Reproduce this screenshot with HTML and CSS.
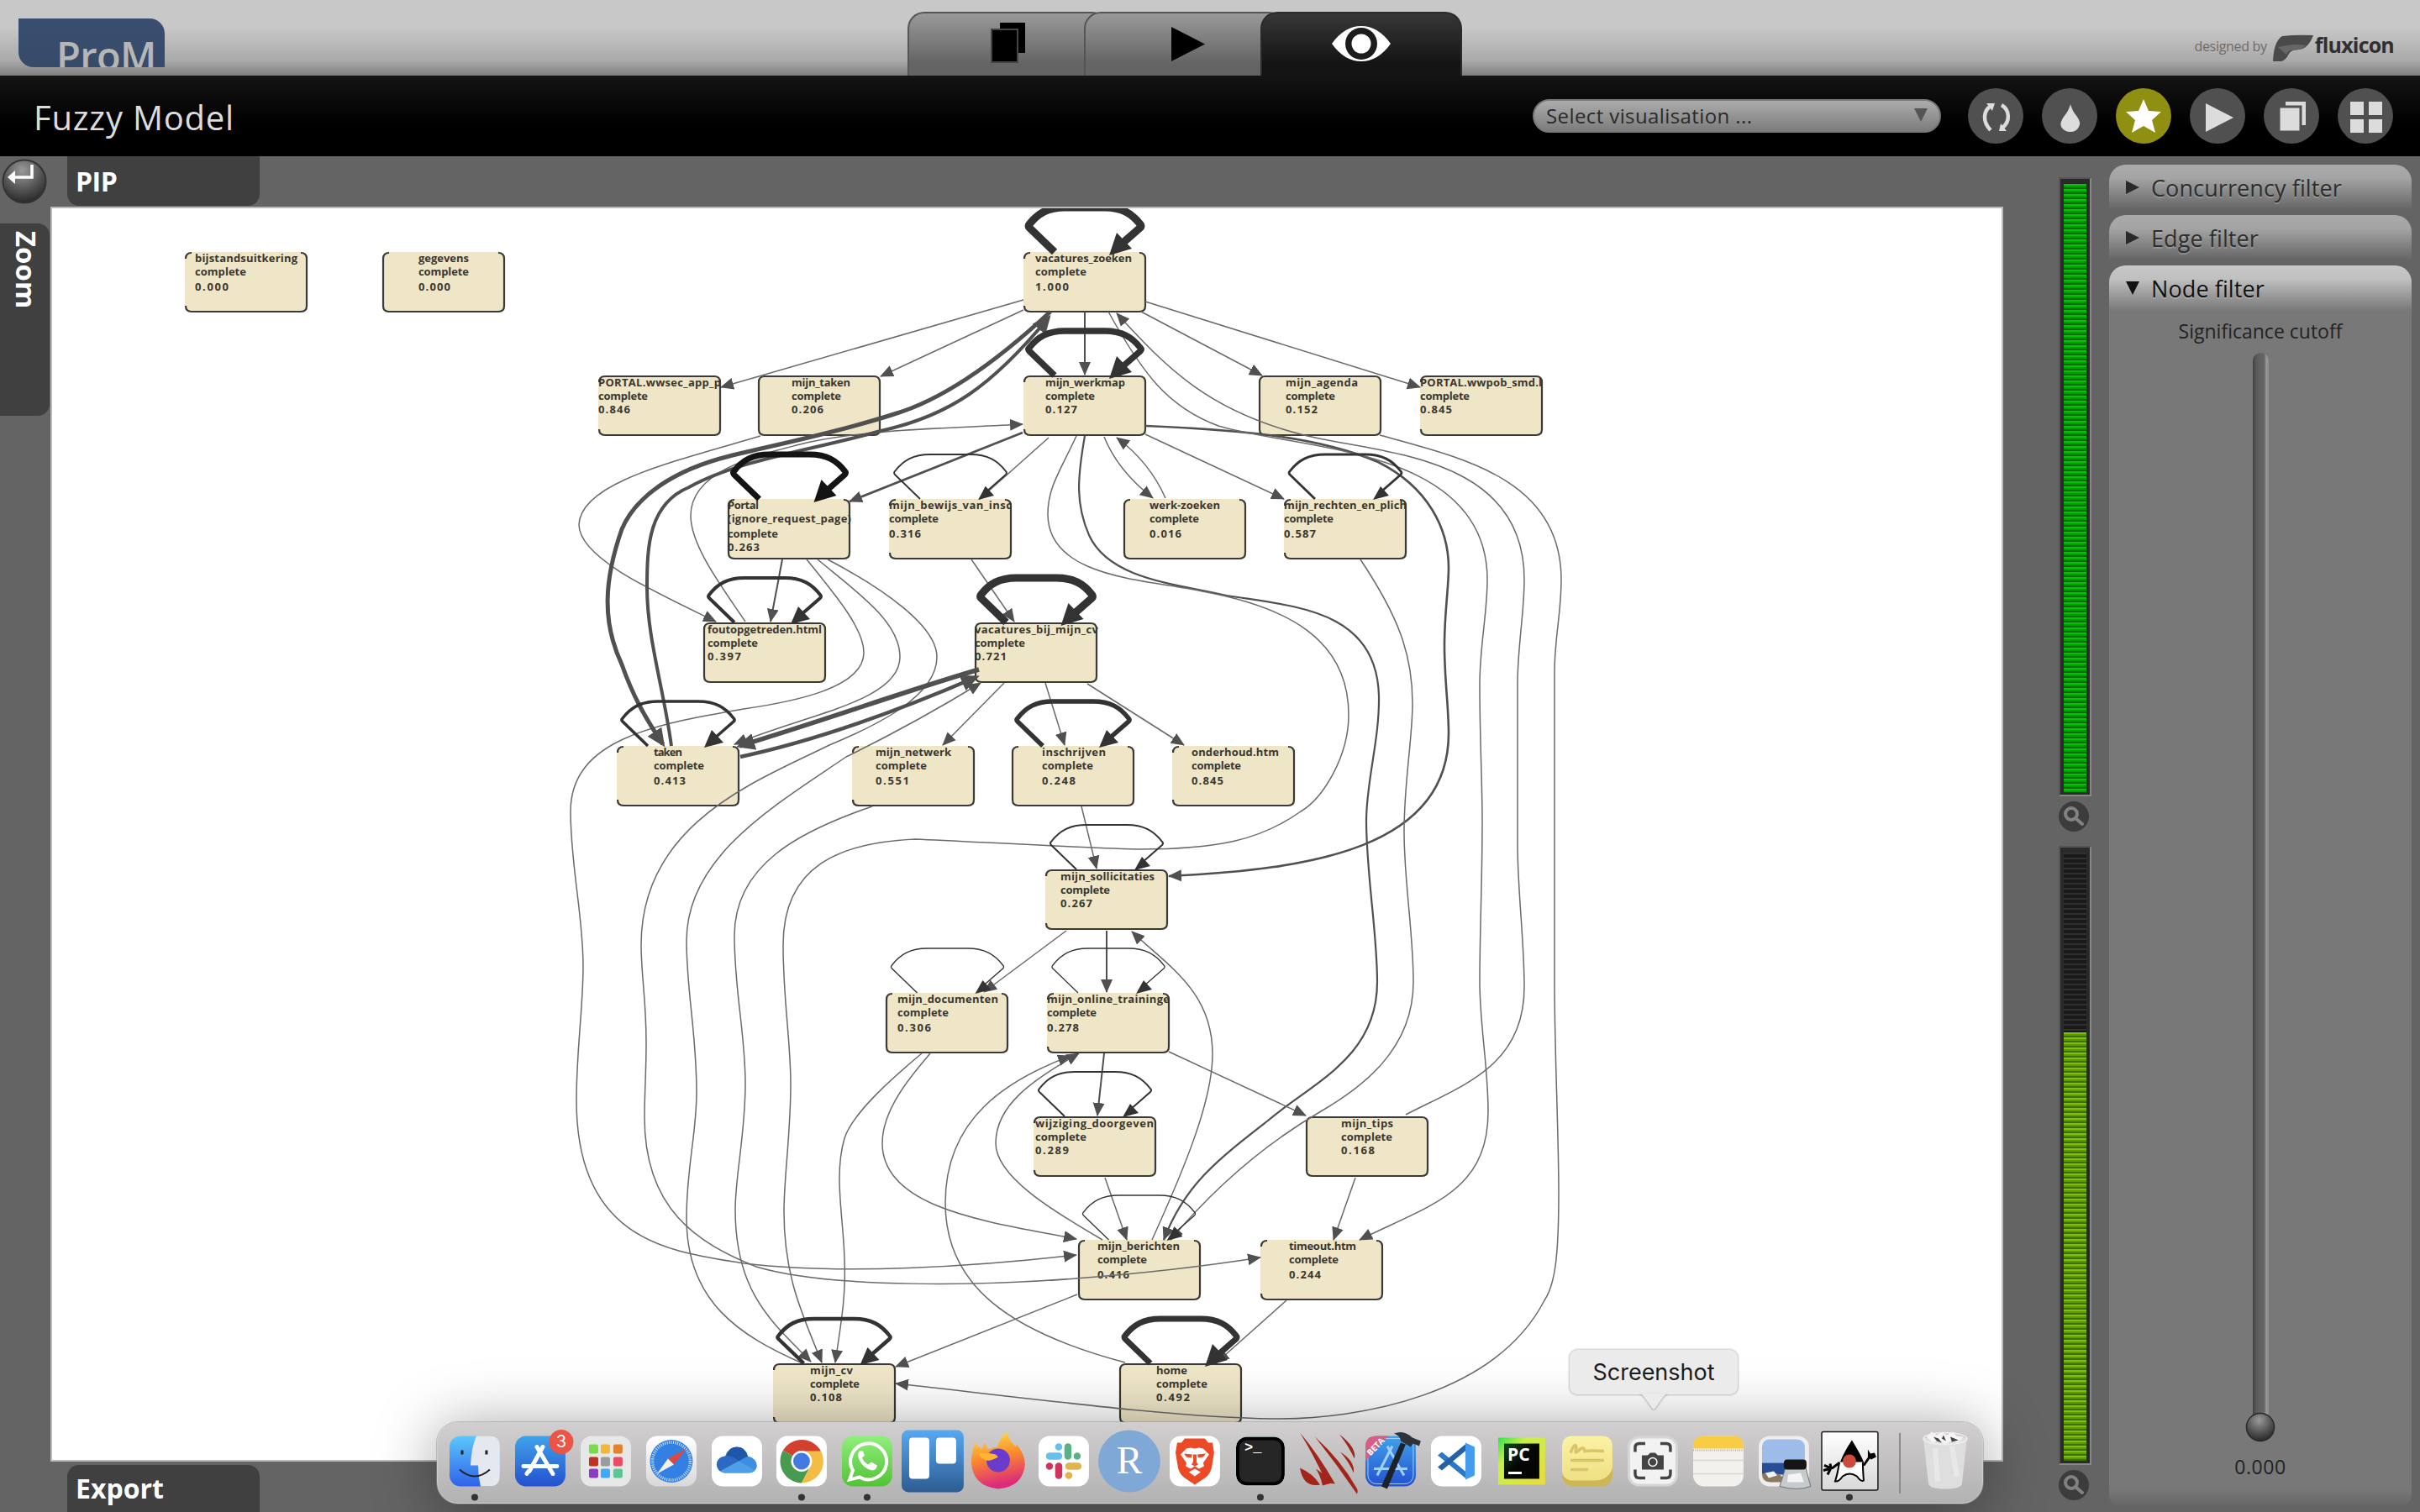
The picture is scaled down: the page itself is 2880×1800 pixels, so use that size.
FILE: index.html
```html
<!DOCTYPE html>
<html lang="en">
<head>
<meta charset="utf-8">
<title>ProM - Fuzzy Model</title>
<link rel="stylesheet" href="styles.css">
</head>
<body>
<div class="app">
  <header class="topbar">
    <div class="logo"><span>ProM</span></div>
    <nav class="tabs">
      <div class="tab"><svg width="44" height="52" viewBox="0 0 44 52"><path d="M12 1h30v36h-30z" fill="#000"/><path d="M2 9h31v39H2z" fill="#000" stroke="#444" stroke-width="2"/></svg></div>
      <div class="tab"><svg width="44" height="44" viewBox="0 0 44 44"><path d="M2 1L42 21.500L2 42z" fill="#000"/></svg></div>
      <div class="tab tab-on"><svg width="72" height="46" viewBox="0 0 72 46"><path d="M1 23Q16 2 36 2T71 23Q56 44 36 44T1 23z" fill="#fff"/><circle cx="36" cy="23" r="19" fill="#1c1c1c"/><circle cx="36" cy="23" r="11.500" fill="#fff"/></svg></div>
    </nav>
    <div class="credit"><span class="by">designed by</span>
      <svg width="52" height="36" viewBox="0 0 52 36"><path d="M13 2Q30 0 50 1Q44 17 33 18Q24 18 21 23Q17 31 12 32H2Q3 8 13 2z" fill="#4a4a4a"/><path d="M8 15Q26 10 42 13Q36 18 27 19Q20 18 18 24z" fill="#666"/></svg>
      <b>fluxicon</b></div>
  </header>

  <section class="titlebar">
    <h1>Fuzzy Model</h1>
    <div class="select"><span>Select visualisation ...</span><i></i></div>
    <div class="actions">
      <svg viewBox="-33 -33 66 66"><circle r="33"/><path d="M-5 -12C-15 -7 -16 7 -6 17M7 -13C17 -7 18 7 7 15" fill="none" stroke="#dcdcdc" stroke-width="4.500"/><path class="g" d="M-11 -15H-1L-4 -6zM13 18H4L6 9z"/></svg>
      <svg viewBox="-33 -33 66 66"><circle r="33"/><path class="g" d="M1 -14Q3 -6 9 1Q14 8 11 13Q8 19 1 19T-10 13Q-12 8 -7 1Q-1 -6 1 -14z"/></svg>
      <svg viewBox="-33 -33 66 66"><circle r="33" class="gold"/><path d="M0 -20L6 -6L21 -5L10 5L14 20L0 12L-14 20L-10 5L-21 -5L-6 -6z" fill="#fff"/></svg>
      <svg viewBox="-33 -33 66 66"><circle r="33"/><path class="g" d="M-14 -15L19 2L-14 19z"/></svg>
      <svg viewBox="-33 -33 66 66"><circle r="33"/><path class="g" d="M-7 -17H17V11H-7z"/><path d="M-15 -11H11V19H-15z" fill="#dcdcdc" stroke="#505050" stroke-width="3"/></svg>
      <svg viewBox="-33 -33 66 66"><circle r="33"/><path class="g" d="M-18 -17H-2V-1H-18zM4 -17H20V-1H4zM-18 4H-2V20H-18zM4 4H20V20H4z"/></svg>
    </div>
  </section>

  <main class="work">
    <aside class="rail">
      <svg class="back" width="56" height="56" viewBox="0 0 56 56"><defs><radialGradient id="knob" cx=".45" cy=".25" r=".8"><stop offset="0" stop-color="#9a9a9a"/><stop offset=".55" stop-color="#555"/><stop offset="1" stop-color="#222"/></radialGradient></defs><circle cx="28" cy="28" r="25.500" fill="url(#knob)" stroke="#333" stroke-width="2"/><path d="M37 8V23H16" fill="none" stroke="#fff" stroke-width="3.500"/><path d="M8 23L17 15V31z" fill="#fff"/></svg>
      <div class="zoomtab"><span>Zoom</span></div>
    </aside>

    <div class="stage">
      <div class="sidetab">PIP</div>
      <div class="canvas">
<svg class="graph" viewBox="62 248 2320 1490" width="2320" height="1490">
<defs>
  <g id="b"><rect width="146" height="72" rx="8" fill="#efe6c8"/><path class="o" d="M1 8Q1 1 8 1M1 64Q1 71 8 71H138Q145 71 145 64V8Q145 1 138 1"/></g>
  <path id="t" class="o" d="M8 1H138"/>
  <path id="l" class="o" d="M1 8V64"/>
  <path id="loop" d="M-36 0L-66 -29Q-68 -31 -66 -33C-56 -46 -44 -53 -24 -53H24C44 -53 56 -46 66 -33Q68 -31 66 -29L42 -8"/>
  <path id="a1" d="M33 1L42 -15L52 -4z"/>
  <path id="a2" d="M31 2L40 -19L54 -4z"/>
  <path id="a3" d="M29 4L38 -23L56 -4z"/>
  <marker id="arr" markerUnits="userSpaceOnUse" markerWidth="18" markerHeight="16" viewBox="0 0 18 16" refX="15" refY="8" orient="auto"><path d="M0 1L16 8L0 15z" fill="#505050"/></marker>
  <marker id="big" markerUnits="userSpaceOnUse" markerWidth="26" markerHeight="22" viewBox="0 0 26 22" refX="18" refY="11" orient="auto"><path d="M0 1L22 11L0 21z" fill="#505050"/></marker>
</defs>
<g class="nodes">
<g transform="translate(220 300)"><use href="#b"/><text x="12" y="12" textLength="122">bijstandsuitkering</text><text x="12" y="28" textLength="61">complete</text><text x="12" y="46" textLength="40">0.000</text></g>
<g transform="translate(455 300)"><use href="#b"/><use href="#l"/><text x="43" y="12" textLength="60">gegevens</text><text x="43" y="28" textLength="60">complete</text><text x="43" y="46" textLength="38">0.000</text></g>
<g transform="translate(1218 300)"><use href="#b"/><text x="14" y="12" textLength="115">vacatures_zoeken</text><text x="14" y="28" textLength="61">complete</text><text x="14" y="46" textLength="40">1.000</text></g>
<g transform="translate(712 447)"><use href="#b"/><use href="#t"/><text x="0" y="13" textLength="146">PORTAL.wwsec_app_p</text><text x="0" y="29" textLength="59">complete</text><text x="0" y="45" textLength="38">0.846</text></g>
<g transform="translate(902 447)"><use href="#b"/><use href="#t"/><use href="#l"/><text x="40" y="13" textLength="70">mijn_taken</text><text x="40" y="29" textLength="59">complete</text><text x="40" y="45" textLength="38">0.206</text></g>
<g transform="translate(1218 447)"><use href="#b"/><use href="#t"/><text x="26" y="13" textLength="95">mijn_werkmap</text><text x="26" y="29" textLength="59">complete</text><text x="26" y="45" textLength="38">0.127</text></g>
<g transform="translate(1498 447)"><use href="#b"/><use href="#t"/><use href="#l"/><text x="32" y="13" textLength="86">mijn_agenda</text><text x="32" y="29" textLength="59">complete</text><text x="32" y="45" textLength="38">0.152</text></g>
<g transform="translate(1690 447)"><use href="#b"/><use href="#t"/><text x="0" y="13" textLength="145">PORTAL.wwpob_smd.l</text><text x="0" y="29" textLength="59">complete</text><text x="0" y="45" textLength="38">0.845</text></g>
<g transform="translate(866 594)"><use href="#b"/><use href="#l"/><text x="0" y="12" textLength="37">Portal</text><text x="0" y="28" textLength="147">(ignore_request_page)</text><text x="0" y="46" textLength="60">complete</text><text x="0" y="62" textLength="38">0.263</text></g>
<g transform="translate(1058 594)"><use href="#b"/><text x="0" y="12" textLength="146">mijn_bewijs_van_insc</text><text x="0" y="28" textLength="59">complete</text><text x="0" y="46" textLength="38">0.316</text></g>
<g transform="translate(1337 594)"><use href="#b"/><use href="#l"/><text x="31" y="12" textLength="84">werk-zoeken</text><text x="31" y="28" textLength="59">complete</text><text x="31" y="46" textLength="38">0.016</text></g>
<g transform="translate(1528 594)"><use href="#b"/><text x="0" y="12" textLength="146">mijn_rechten_en_plich</text><text x="0" y="28" textLength="59">complete</text><text x="0" y="46" textLength="38">0.587</text></g>
<g transform="translate(837 741)"><use href="#b"/><use href="#t"/><use href="#l"/><text x="5" y="13" textLength="136">foutopgetreden.html</text><text x="5" y="29" textLength="60">complete</text><text x="5" y="45" textLength="40">0.397</text></g>
<g transform="translate(1160 741)"><use href="#b"/><use href="#t"/><use href="#l"/><text x="0" y="13" textLength="147">vacatures_bij_mijn_cv</text><text x="0" y="29" textLength="60">complete</text><text x="0" y="45" textLength="38">0.721</text></g>
<g transform="translate(734 888)"><use href="#b"/><text x="44" y="12" textLength="34">taken</text><text x="44" y="28" textLength="60">complete</text><text x="44" y="46" textLength="38">0.413</text></g>
<g transform="translate(1014 888)"><use href="#b"/><text x="28" y="12" textLength="90">mijn_netwerk</text><text x="28" y="28" textLength="61">complete</text><text x="28" y="46" textLength="40">0.551</text></g>
<g transform="translate(1204 888)"><use href="#b"/><use href="#l"/><text x="36" y="12" textLength="76">inschrijven</text><text x="36" y="28" textLength="61">complete</text><text x="36" y="46" textLength="40">0.248</text></g>
<g transform="translate(1395 888)"><use href="#b"/><text x="23" y="12" textLength="104">onderhoud.htm</text><text x="23" y="28" textLength="59">complete</text><text x="23" y="46" textLength="38">0.845</text></g>
<g transform="translate(1244 1035)"><use href="#b"/><use href="#t"/><text x="18" y="13" textLength="112">mijn_sollicitaties</text><text x="18" y="29" textLength="59">complete</text><text x="18" y="45" textLength="38">0.267</text></g>
<g transform="translate(1054 1182)"><use href="#b"/><use href="#l"/><text x="14" y="12" textLength="120">mijn_documenten</text><text x="14" y="28" textLength="61">complete</text><text x="14" y="46" textLength="40">0.306</text></g>
<g transform="translate(1246 1182)"><use href="#b"/><text x="0" y="12" textLength="146">mijn_online_traininge</text><text x="0" y="28" textLength="59">complete</text><text x="0" y="46" textLength="38">0.278</text></g>
<g transform="translate(1230 1329)"><use href="#b"/><use href="#t"/><text x="2" y="13" textLength="141">wijziging_doorgeven</text><text x="2" y="29" textLength="61">complete</text><text x="2" y="45" textLength="40">0.289</text></g>
<g transform="translate(1554 1329)"><use href="#b"/><use href="#t"/><use href="#l"/><text x="42" y="13" textLength="62">mijn_tips</text><text x="42" y="29" textLength="61">complete</text><text x="42" y="45" textLength="40">0.168</text></g>
<g transform="translate(1283 1476)"><use href="#b"/><use href="#l"/><text x="23" y="12" textLength="98">mijn_berichten</text><text x="23" y="28" textLength="59">complete</text><text x="23" y="46" textLength="38">0.416</text></g>
<g transform="translate(1500 1476)"><use href="#b"/><text x="34" y="12" textLength="80">timeout.htm</text><text x="34" y="28" textLength="59">complete</text><text x="34" y="46" textLength="38">0.244</text></g>
<g transform="translate(920 1623)"><use href="#b"/><use href="#t"/><text x="44" y="13" textLength="51">mijn_cv</text><text x="44" y="29" textLength="59">complete</text><text x="44" y="45" textLength="38">0.108</text></g>
<g transform="translate(1332 1623)"><use href="#b"/><use href="#t"/><use href="#l"/><text x="44" y="13" textLength="37">home</text><text x="44" y="29" textLength="61">complete</text><text x="44" y="45" textLength="40">0.492</text></g>
</g>
<g class="edges">
<path d="M1218 357L858 461"/>
<path d="M1218 369L1048 448"/>
<path d="M1291 371V446" stroke-width="2"/>
<path d="M1358 371L1502 447"/>
<path d="M1363 359L1690 461"/>
<path d="M905 519C800 550 690 575 689 625C690 665 780 705 852 740"/>
<path d="M887 740C860 700 822 650 822 614C822 560 900 542 960 527C1040 510 1130 510 1217 505"/>
<path d="M1217 515L1011 597" stroke-width="2.600"/>
<path d="M1248 521L1166 594"/>
<path d="M1314 520Q1330 560 1372 593"/>
<path d="M1387 593Q1368 550 1329 521"/>
<path d="M1363 517L1528 594"/>
<path d="M1291 519C1282 570 1280 600 1296 637C1320 690 1400 695 1460 709C1540 722 1638 725 1641 828C1642 880 1626 930 1626 977C1626 1040 1639 1110 1639 1169C1639 1260 1560 1290 1509 1334C1450 1380 1410 1410 1385 1476" stroke-width="2.200"/>
<path d="M1281 519C1262 560 1247 580 1247 612C1247 690 1370 690 1431 704C1530 722 1605 760 1605 851C1605 900 1575 950 1548 966C1500 1000 1450 1011 1354 1011C1257 1008 1160 1002 1089 999C1000 1003 932 1030 932 1125C932 1190 941 1240 941 1290C941 1350 933 1400 933 1443C933 1520 955 1565 978 1622"/>
<path d="M1363 507C1480 512 1570 520 1640 550C1700 580 1724 630 1724 676C1724 700 1719 730 1719 768C1719 810 1724 840 1724 873C1724 1010 1560 1035 1391 1043" stroke-width="2.600"/>
<path d="M1319 371C1360 445 1390 485 1450 507C1540 535 1770 530 1770 690C1770 730 1761 770 1761 814C1761 880 1764 930 1764 977C1764 1050 1761 1110 1761 1169C1761 1220 1771 1270 1771 1323C1771 1420 1700 1435 1618 1476"/>
<path d="M1673 1327C1740 1292 1814 1270 1814 1175C1814 1120 1806 1060 1806 1005V814C1806 770 1814 730 1814 690C1814 540 1640 540 1552 518C1440 490 1390 440 1329 373"/>
<path d="M1642 518C1740 545 1858 570 1858 690C1858 730 1850 760 1850 800V1170C1850 1250 1855 1350 1855 1420C1855 1500 1850 1530 1838 1548C1780 1660 1620 1690 1514 1689C1400 1688 1230 1665 1066 1647"/>
<path d="M1619 666C1665 735 1681 780 1681 837C1681 880 1671 930 1671 990C1671 1050 1682 1110 1682 1169C1682 1250 1620 1295 1572 1323C1500 1365 1440 1420 1393 1476"/>
<path d="M1156 666L1207 740"/>
<path d="M931 666L917 740" stroke-width="2"/>
<path d="M960 666C1000 715 1028 750 1028 777C1028 820 940 836 885 844C780 862 679 880 679 966C679 1030 694 1090 694 1150C694 1200 686 1250 686 1310C686 1480 800 1490 885 1504C1000 1518 1160 1508 1281 1494"/>
<path d="M973 666C1020 705 1071 740 1071 782C1071 835 960 850 874 886"/>
<path d="M985 666C1050 700 1115 745 1115 782C1115 830 1040 865 987 887C900 930 763 980 763 1125C763 1160 769 1190 769 1240C769 1280 767 1300 767 1330C767 1440 830 1480 900 1508C990 1535 1180 1530 1280 1522C1360 1516 1430 1508 1500 1497"/>
<path d="M955 1623C880 1590 817 1550 817 1450C817 1390 829 1350 829 1300C829 1230 817 1180 817 1120C817 1020 920 960 1007 901C1060 875 1110 848 1167 813"/>
<path d="M1038 960C950 990 874 1030 874 1114C874 1180 887 1230 887 1290C887 1350 875 1400 875 1440C875 1540 920 1575 965 1621"/>
<path d="M1195 813L1122 887"/>
<path d="M1244 813L1267 887"/>
<path d="M1294 814L1409 887"/>
<path d="M1287 960L1305 1034"/>
<path d="M1269 1108L1171 1181"/>
<path d="M1317 1108V1181" stroke-width="2"/>
<path d="M1371 1476C1410 1390 1443 1310 1443 1255C1443 1180 1390 1150 1347 1109"/>
<path d="M1097 1254C1060 1285 1015 1325 1005 1355C992 1400 1004 1450 1005 1500C1007 1545 1000 1580 994 1622"/>
<path d="M1107 1254C1085 1280 1050 1320 1050 1361C1050 1440 1180 1455 1281 1475"/>
<path d="M1312 1476C1250 1440 1185 1400 1185 1361C1185 1315 1230 1285 1284 1254"/>
<path d="M1339 1622C1200 1585 1125 1530 1125 1432C1125 1330 1200 1285 1274 1257"/>
<path d="M1314 1254L1306 1328" stroke-width="2"/>
<path d="M1391 1252L1554 1328"/>
<path d="M1315 1402L1341 1476"/>
<path d="M1613 1402L1587 1476"/>
<path d="M1531 1548L1448 1622"/>
<path d="M1282 1541L1066 1627"/>
</g>
<g class="heavy">
<path d="M1250 371C1192 425 1125 475 1064 493C990 517 910 532 868 543C800 560 756 592 740 630C719 690 716 740 740 791C753 828 768 855 789 886" stroke-width="5"/>
<path d="M799 888C790 820 770 760 770 699C770 650 772 600 820 580C880 547 970 535 1048 513C1130 495 1180 460 1248 378" stroke-width="4"/>
<path d="M1165 797C1070 825 980 858 880 888" stroke-width="5.500"/>
<path d="M881 901C970 882 1060 850 1162 806" stroke-width="4.500"/>
</g>
<g class="loops">
<g transform="translate(1291 300)"><use href="#loop" stroke-width="9"/><use href="#a3" class="h"/></g>
<g transform="translate(1291 447)"><use href="#loop" stroke-width="7.500"/><use href="#a3" class="h"/></g>
<g transform="translate(939.500 594)" class="dark"><use href="#loop" stroke-width="7"/><use href="#a3" class="h"/></g>
<g transform="translate(1131 594)"><use href="#loop" stroke-width="1.800"/><use href="#a1" class="h"/></g>
<g transform="translate(1601 594)"><use href="#loop" stroke-width="2.800"/><use href="#a1" class="h"/></g>
<g transform="translate(910 741)"><use href="#loop" stroke-width="4"/><use href="#a2" class="h"/></g>
<g transform="translate(1233.500 741)"><use href="#loop" stroke-width="9"/><use href="#a3" class="h"/></g>
<g transform="translate(807 888)"><use href="#loop" stroke-width="3.600"/><use href="#a2" class="h"/></g>
<g transform="translate(1277 888)"><use href="#loop" stroke-width="5.500"/><use href="#a2" class="h"/></g>
<g transform="translate(1317 1035)"><use href="#loop" stroke-width="2"/><use href="#a1" class="h"/></g>
<g transform="translate(1127.500 1182)"><use href="#loop" stroke-width="1.400"/><use href="#a1" class="h"/></g>
<g transform="translate(1319 1182)"><use href="#loop" stroke-width="1.300"/><use href="#a1" class="h"/></g>
<g transform="translate(1303 1329)"><use href="#loop" stroke-width="2"/><use href="#a1" class="h"/></g>
<g transform="translate(1355.500 1476)"><use href="#loop" stroke-width="1.300"/><use href="#a1" class="h"/></g>
<g transform="translate(992.500 1623)"><use href="#loop" stroke-width="4.500"/><use href="#a2" class="h"/></g>
<g transform="translate(1405 1623)"><use href="#loop" stroke-width="7"/><use href="#a3" class="h"/></g>
</g>
</svg>
      </div>
      <div class="sidetab sidetab-low">Export</div>
    </div>

    <div class="meters">
      <div class="meter green"><div style="height:100%"></div></div>
      <svg class="mag" viewBox="0 0 36 36"><circle cx="18" cy="18" r="18"/><circle cx="15" cy="15" r="7"/><path d="M20 20L28 27"/></svg>
      <div class="meter lime"><div style="height:70.500%"></div></div>
      <svg class="mag" viewBox="0 0 36 36"><circle cx="18" cy="18" r="18"/><circle cx="15" cy="15" r="7"/><path d="M20 20L28 27"/></svg>
    </div>

    <aside class="filters">
      <div class="fhead"><i class="right"></i>Concurrency filter</div>
      <div class="fhead"><i class="right"></i>Edge filter</div>
      <div class="fopen">
        <div class="fhead on"><i class="down"></i>Node filter</div>
        <div class="cut">Significance cutoff</div>
        <div class="track"></div>
        <svg class="thumb" width="36" height="36" viewBox="0 0 36 36"><circle cx="18" cy="18" r="16.500" fill="url(#knob)" stroke="#2a2a2a" stroke-width="1.500"/></svg>
        <div class="val">0.000</div>
      </div>
    </aside>
  </main>
</div>

<div class="tooltip">Screenshot<svg width="34" height="20" viewBox="0 0 34 20"><path d="M0 0Q4 1 7 6L15 17Q17 20 19 17L27 6Q30 1 34 0z" fill="#ebebeb"/></svg></div>

<div class="dock">
<svg viewBox="-39 -45.500 78 96"><defs>
<linearGradient id="gb" x2="0" y2="1"><stop offset="0" stop-color="#5cc8fa"/><stop offset="1" stop-color="#2f62ea"/></linearGradient>
<linearGradient id="gas" x2="0" y2="1"><stop offset="0" stop-color="#3fa3ea"/><stop offset="1" stop-color="#2550cf"/></linearGradient>
<linearGradient id="gw" x2="0" y2="1"><stop offset="0" stop-color="#8fef7c"/><stop offset="1" stop-color="#53c236"/></linearGradient>
<linearGradient id="gt" x2="0" y2="1"><stop offset="0" stop-color="#56a9f0"/><stop offset="1" stop-color="#2d5c92"/></linearGradient>
<linearGradient id="gf" x2=".2" y2="1"><stop offset="0" stop-color="#ffe94a"/><stop offset=".5" stop-color="#fb8a2c"/><stop offset="1" stop-color="#dc2a7c"/></linearGradient>
<linearGradient id="gp" x2="1" y2="1"><stop offset="0" stop-color="#2fe24d"/><stop offset=".3" stop-color="#c8f04a"/><stop offset="1" stop-color="#e8dc3c"/></linearGradient>
<linearGradient id="gk" x2="1" y2="1"><stop offset="0" stop-color="#164a1c"/><stop offset=".5" stop-color="#050505"/></linearGradient>
<linearGradient id="gy" x2="0" y2="1"><stop offset="0" stop-color="#fbf2a4"/><stop offset="1" stop-color="#efe084"/></linearGradient>
<linearGradient id="gs" x2="0" y2="1"><stop offset="0" stop-color="#fff"/><stop offset="1" stop-color="#d8d8d8"/></linearGradient>
</defs>
<rect x="-30" y="-30" width="60" height="60" rx="13" fill="url(#gb)"/><path d="M2 -30H17Q30 -30 30 -17V17Q30 30 17 30H7Q4 18 4 5H-5Q-4 -16 2 -30z" fill="#e4e8ef"/><path d="M-15 -13V-8M14 -13V-8" stroke="#222" stroke-width="3"/><path d="M-18 10Q0 26 18 10" fill="none" stroke="#222" stroke-width="2"/><circle cy="43" r="4" class="dot"/></svg>
<svg viewBox="-39 -45.500 78 96"><rect x="-30" y="-30" width="60" height="60" rx="13" fill="url(#gas)"/><path d="M3 -17L-13 12M-4 -17L15 15M-20 6H20M-14 12L-16 15" stroke="#fff" stroke-width="5" stroke-linecap="round"/><circle cx="25" cy="-23" r="14.500" fill="#ea5545"/><text x="25" y="-16.500" class="badge">3</text></svg>
<svg viewBox="-39 -45.500 78 96"><rect x="-30" y="-30" width="60" height="60" rx="13" fill="#e6e8e8"/><g><rect x="-20" y="-20" width="11" height="11" rx="2" fill="#76dd49"/><rect x="-6" y="-20" width="11" height="11" rx="2" fill="#f2b63a"/><rect x="9" y="-20" width="11" height="11" rx="2" fill="#e4822c"/><rect x="-20" y="-5" width="11" height="11" rx="2" fill="#c32f22"/><rect x="-6" y="-5" width="11" height="11" rx="2" fill="#999c9c"/><rect x="9" y="-5" width="11" height="11" rx="2" fill="#ea4b62"/><rect x="-20" y="9" width="11" height="11" rx="2" fill="#8c3cc4"/><rect x="-6" y="9" width="11" height="11" rx="2" fill="#3fa9f5"/><rect x="9" y="9" width="11" height="11" rx="2" fill="#5cc596"/></g></svg>
<svg viewBox="-39 -45.500 78 96"><rect x="-30" y="-30" width="60" height="60" rx="13" fill="url(#gs)"/><circle r="25.500" fill="#3380e4"/><circle r="22.500" fill="none" stroke="#cfe4fa" stroke-width="3.500" stroke-dasharray="1 1.500"/><path d="M18 -15L3 4L-4 -3z" fill="#e2453a"/><path d="M-17 15L3 4L-4 -3z" fill="#f2f2f2"/></svg>
<svg viewBox="-39 -45.500 78 96"><rect x="-30" y="-30" width="60" height="60" rx="13" fill="#fff"/><path d="M-14 -6Q-10 -17 0 -17Q10 -17 13 -6Q24 -3 24 6Q22 14 14 14H-15Q-24 12 -24 4Q-24 -4 -14 -6z" fill="#3c8ee0"/><path d="M-13 -6Q-10 -17 0 -17Q10 -17 13 -6L2 0Q-5 -6 -13 -6z" fill="#1f57a8"/><path d="M2 0L-20 12Q-25 7 -24 2Q-21 -6 -13 -6Q-5 -6 2 0z" fill="#2c68c4"/><path d="M2 0L22 11Q19 14 14 14H-15L-20 12z" fill="#4f9fe8"/></svg>
<svg viewBox="-39 -45.500 78 96"><rect x="-30" y="-30" width="60" height="60" rx="13" fill="#fff"/><path d="M0 0L-22 -13A26 26 0 0 1 23 -12z" fill="#d3402f"/><path d="M0 0L-22 -13A26 26 0 0 0 0 26L11 5z" fill="#479a50"/><path d="M0 -12H23A26 26 0 0 1 0 26L11 5z" fill="#f2bd42"/><circle r="12.500" fill="#fff"/><circle r="10" fill="#4379e0"/><circle cy="43" r="4" class="dot"/></svg>
<svg viewBox="-39 -45.500 78 96"><rect x="-30" y="-30" width="60" height="60" rx="13" fill="url(#gw)"/><path d="M-21 22L-17 11A21.500 21.500 0 1 1 -9 19z" fill="none" stroke="#fff" stroke-width="4"/><path d="M-9 -12Q-12 -9 -10 -3Q-5 9 6 11Q11 11 12 5L5 1L1 4Q-4 1 -6 -4L-3 -7L-5 -12z" fill="#fff"/><circle cy="43" r="4" class="dot"/></svg>
<svg viewBox="-39 -45.500 78 96"><rect x="-37" y="-37" width="74" height="74" rx="8" fill="url(#gt)"/><rect x="-28" y="-28" width="24" height="49" rx="4" fill="#fff"/><rect x="4" y="-28" width="24" height="31" rx="4" fill="#fff"/></svg>
<svg viewBox="-39 -45.500 78 96"><path d="M-27 -22L-20 -14L-16 -22L-12 -14Q-6 -17 -1 -17Q2 -28 10 -35Q13 -25 21 -17L22 -20Q32 -8 32 4Q29 31 0 33Q-30 30 -32 2Q-32 -12 -27 -22z" fill="url(#gf)"/><circle cy="-1" r="14" fill="#6b3ccc"/><path d="M-14 -1Q-23 -5 -24 -9Q-14 -11 -3 -8L0 -5Q-8 0 -14 -1z" fill="#ffb62e"/></svg>
<svg viewBox="-39 -45.500 78 96"><rect x="-30" y="-30" width="60" height="60" rx="13" fill="#fff"/><g stroke-width="8.500" stroke-linecap="round"><path d="M-17 -6H-6M-6 -17V-17" stroke="#63c1ea"/><path d="M5 -17V-6M16 -6V-6" stroke="#58b384"/><path d="M6 6H17M6 17V17" stroke="#e2b44c"/><path d="M-6 6V17M-17 6V6" stroke="#cf345c"/></g></svg>
<svg viewBox="-39 -45.500 78 96"><circle r="37" fill="#80a8d6"/><text x="0" y="15" class="rr">R</text></svg>
<svg viewBox="-39 -45.500 78 96"><rect x="-30" y="-30" width="60" height="60" rx="13" fill="#fff"/><path d="M-12 -27H12L16 -22H21L23 -10L20 8Q18 16 12 20L0 28L-12 20Q-18 16 -20 8L-23 -10L-21 -22H-16z" fill="#ec4a26"/><path d="M-10 -15L-5 -16L0 -15L5 -16L10 -15L17 -8L10 2L11 6L5 9L0 6L-5 9L-11 6L-10 2L-17 -8z" fill="#fff"/><path d="M-13 -9L-3 -8L-4 -4L-10 -5zM13 -9L3 -8L4 -4L10 -5zM-2 -8V1L-4 4L0 6L4 4L2 1V-8z" fill="#ec4a26"/><path d="M-7 13L0 9L7 13L0 18z" fill="#fff"/></svg>
<svg viewBox="-39 -45.500 78 96"><rect x="-27" y="-27" width="54" height="54" rx="11" fill="#262626" stroke="#000" stroke-width="4"/><rect x="-29.500" y="-29.500" width="59" height="59" rx="13" fill="none" stroke="#bcc9cc"/><text x="-19" y="-12" class="term">&gt;_</text><circle cy="43" r="4" class="dot"/></svg>
<svg viewBox="-39 -45.500 78 96"><path d="M-34 -36Q-12 -10 8 25L-2 24Q-18 -10 -34 -36zM-16 -31Q15 -3 33 29Q36 33 34 37Q10 2 -16 -31zM13 -34Q34 -18 31 -5Q24 -20 13 -34zM14 -13Q32 -2 30 12Q24 -2 14 -13zM-34 6Q-18 13 -10 26Q-30 30 -34 6zM-15 7Q-4 14 4 24L-7 27Q-10 14 -15 7z" transform="translate(3 2)" fill="#a3241a"/></svg>
<svg viewBox="-39 -45.500 78 96"><rect x="-30" y="-30" width="60" height="60" rx="13" fill="url(#gas)"/><rect x="-27" y="-27" width="54" height="54" rx="10" fill="none" stroke="#9fd0fa"/><path d="M2 -18L-16 17M-4 -18L16 17M-20 9H20" stroke="#9fd0fa" stroke-width="3" fill="none"/><path d="M-30 0V-17Q-30 -30 -17 -30H-3z" fill="#d65f88"/><text x="-24" y="-6" class="beta" transform="rotate(-46 -24 -6)">BETA</text><path d="M12 -22L18 -20L-4 33L-11 30z" fill="#1e2226"/><path d="M4 -33Q16 -38 26 -28L36 -24L34 -18L27 -21L24 -17L12 -24Q12 -30 4 -33z" fill="#2d3338"/></svg>
<svg viewBox="-39 -45.500 78 96"><rect x="-30" y="-30" width="60" height="60" rx="13" fill="#fff"/><path d="M-22 -7L-17 -11L12 13V21z" fill="#2a78c8"/><path d="M-22 7L-17 11L12 -13V-21z" fill="#2462a6"/><path d="M11 -22L22 -17V17L11 22z" fill="#459bee"/></svg>
<svg viewBox="-39 -45.500 78 96"><rect x="-28" y="-28" width="56" height="56" fill="url(#gp)"/><rect x="-21" y="-21" width="42" height="42" fill="url(#gk)"/><text x="-17" y="-1" class="pc">PC</text><path d="M-16 14H0" stroke="#fff" stroke-width="3"/></svg>
<svg viewBox="-39 -45.500 78 96"><rect x="-30" y="-24" width="60" height="54" rx="13" fill="#cfb654"/><path d="M-17 -30H17Q30 -30 30 -17V8Q26 22 10 23H-20Q-30 20 -30 12V-17Q-30 -30 -17 -30z" fill="url(#gy)"/><path d="M-20 -10Q-14 -24 -13 -16Q-16 -6 -9 -14Q-4 -18 -3 -12Q4 -13 20 -12M-20 -1H20M-20 10H1" fill="none" stroke="#d8c56a" stroke-width="3.500"/></svg>
<svg viewBox="-39 -45.500 78 96"><rect x="-28.500" y="-28.500" width="57" height="57" rx="12" fill="#f2f2f2" stroke="#d6d6d6" stroke-width="3"/><path d="M-21 -11V-16Q-21 -21 -16 -21H-9M9 -21H16Q21 -21 21 -16V-11M21 10V15Q21 20 16 20H9M-9 20H-16Q-21 20 -21 15V10" fill="none" stroke="#444" stroke-width="3.500"/><path d="M-13 -7H-6L-3 -10H3L6 -7H13V10H-13z" fill="#444"/><circle cy="1" r="5" fill="none" stroke="#fff" stroke-width="1.500"/></svg>
<svg viewBox="-39 -45.500 78 96"><rect x="-30" y="-30" width="60" height="60" rx="13" fill="#f2f1ee"/><path d="M-30 -15V-17Q-30 -30 -17 -30H17Q30 -30 30 -17V-15z" fill="#f8cc44"/><path d="M-30 -13H30" stroke="#aaa" stroke-dasharray="1 1.500" stroke-width="2"/><path d="M-30 -1H30M-30 15H30" stroke="#d6d6d2" stroke-width="1.500"/></svg>
<svg viewBox="-39 -45.500 78 96"><rect x="-30" y="-30" width="60" height="60" rx="13" fill="#eee"/><path d="M-26 2V-16Q-26 -26 -16 -26H14Q25 -26 25 -16V2z" fill="#9dbcea"/><path d="M-26 2H25V16H-26z" fill="#274e94"/><path d="M-26 15Q-10 10 0 20V25H-16Q-26 25 -26 15z" fill="#8a7a62"/><path d="M-22 14L-12 12L-8 17L-18 20z" fill="#eef3f6"/><path d="M2 8H26L32 30Q16 36 -5 30z" fill="#c5cacc" stroke="#707070"/><path d="M5 16L20 14L24 25H4z" fill="#f4f4f4"/><rect x="0" y="-2" width="27" height="12" rx="4" fill="#151515"/></svg>
<svg viewBox="-39 -45.500 78 96"><rect x="-33" y="-35" width="67" height="69.500" rx="2" fill="url(#gs)" stroke="#1a1a1a" stroke-width="1.500"/><path d="M3 -25Q14 -7 17 1Q12 3 8 3H-6Q-10 3 -11 1Q-6 -12 3 -25z" fill="#000"/><path d="M-12 1Q-14 15 -17 24Q-13 25 -8 18Q0 12 9 18Q14 25 17 23Q16 10 16 1" fill="#fff" stroke="#000" stroke-width="2"/><circle cy="0" r="8" fill="#cc4b3c"/><path d="M-12 2L-20 8L-31 11M17 5L24 -5M-22 8L-26 16M-23 8L-30 5M-22 8L-23 3" stroke="#000" stroke-width="3" fill="none"/><path d="M22 -14L25 -9L30 -10L32 -5L26 -2L22 -5z" fill="#000"/><circle cy="43" r="4" class="dot"/></svg>
<i class="sep"></i>
<svg viewBox="-39 -45.500 78 96"><path d="M-26 -28H26L20 27Q18 33 0 33T-20 27z" fill="#dedede"/><path d="M-12 -15L-9 24M8 -18L14 18" stroke="#e8e8e8" stroke-width="6"/><path d="M-22 -29L-16 -35L-10 -31L-4 -35L2 -31L8 -35L14 -30L22 -29L15 -22L8 -25L0 -20L-8 -25L-15 -22z" fill="#f5f5f5"/><path d="M-14 -29L-8 -27L-4 -22L-10 -24zM6 -29L16 -25L8 -23zM-2 -31L1 -24L-4 -27z" fill="#444"/><ellipse cy="-27" rx="26" ry="7" fill="none" stroke="#efefef" stroke-width="1.500"/></svg>
</div>
</body>
</html>
```
FILE: styles.css
```css
* { box-sizing: border-box; }
body { margin: 0; width: 2880px; height: 1800px; overflow: hidden; font-family: "Open Sans", "Noto Sans", sans-serif; background: #646464; position: relative; }
svg { display: block; }
.app { display: flex; flex-direction: column; height: 1800px; }

.topbar { flex: none; height: 90px; display: flex; background: linear-gradient(#c8c8c8 0, #c8c8c8 32px, #aaa 72px, #7f7f7f 90px); }
.logo { width: 174px; height: 58px; margin: 22px 0 0 22px; overflow: hidden; background: linear-gradient(#3a4f70, #364a69); border-radius: 0 18px 0 18px; }
.logo span { display: block; margin-left: 45px; margin-top: 12px; font-weight: 600; font-size: 47px; line-height: 64px; letter-spacing: -.6px; color: #b6b6b6; }
.tabs { display: flex; margin: 14px 0 0 884px; }
.tab { width: 240px; margin-right: -30px; display: flex; align-items: center; justify-content: center; border: 2px solid #555; border-bottom: 0; border-radius: 20px 20px 0 0; background: linear-gradient(#999, #646464 60px); }
.tab:nth-child(2) { padding-left: 8px; }
.tab:first-child { padding-bottom: 2px; }
.tab-on { background: linear-gradient(#373737, #141414 60px); border-color: #2a2a2a; margin-right: 0; padding-bottom: 2px; }
.credit { margin-left: auto; padding: 30px 31px 0 0; display: flex; height: 80px; }
.by { font-size: 16px; color: #6c6c6c; line-height: 50px; letter-spacing: -.3px; margin-right: 5px; }
.credit svg { margin-top: 11px; }
.credit b { font-size: 25px; line-height: 46px; color: #303030; letter-spacing: -.8px; }

.titlebar { flex: none; height: 96px; display: flex; background: linear-gradient(#141414, #000 60px); align-items: center; }
h1 { margin: 0; padding: 3px 0 0 40px; font-weight: 400; font-size: 40px; letter-spacing: .8px; color: #dcdcdc; }
.select { margin-left: auto; width: 486px; height: 40px; border-radius: 20px; background: linear-gradient(#acacac, #7c7c7c); border: 2px solid #777; display: flex; align-items: center; justify-content: space-between; padding: 0 14px 2px 14px; font-size: 24px; letter-spacing: .4px; color: #2a2a2a; }
.select i { border: 8px solid transparent; border-top: 16px solid #555; border-bottom: 0; }
.actions { display: flex; gap: 22px; margin: 0 32px 0 32px; }
.actions svg { width: 66px; height: 66px; }
.actions circle { fill: #505050; }
.actions .gold { fill: #8f8f12; }
.g { fill: #dcdcdc; }

.work { flex: 1; min-height: 0; display: flex; }
.rail { width: 60px; padding-top: 2px; }
.back { margin-left: 1px; }
.zoomtab { margin-top: 22px; width: 59px; height: 229px; background: #404040; border-radius: 0 14px 14px 0; writing-mode: vertical-rl; padding: 9px 0; color: #fff; font-weight: 700; font-size: 33px; line-height: 55px; }
.stage { width: 2324px; display: flex; flex-direction: column; }
.sidetab { flex: none; margin-left: 20px; width: 229px; height: 59px; margin-bottom: 1px; border-radius: 0 0 14px 14px; background: #404040; color: #fff; font-weight: 700; font-size: 32px; line-height: 60px; padding-left: 10px; letter-spacing: -.5px; }
.sidetab-low { margin: 4px 0 0 20px; height: 56px; border-radius: 14px 14px 0 0; letter-spacing: 0; line-height: 56px; }
.canvas { flex: none; height: 1494px; background: #fff; border: 2px solid #bbb; overflow: hidden; }
.graph text { font: 700 13px "Open Sans", "Noto Sans", sans-serif; fill: #3a372f; }
.o { fill: none; stroke: #3a3935; stroke-width: 2.200; }
.edges path { fill: none; stroke: #6a6a6a; marker-end: url(#arr); }
.edges path[stroke-width] { stroke: #505050; }
.edges { stroke-width: 1.500; }
.heavy path { fill: none; stroke: #505050; marker-end: url(#big); }
.loops use { fill: none; stroke: #333; }
.loops .h { fill: #333; stroke: none; }
.loops .dark use { stroke: #141414; }
.loops .dark .h { fill: #141414; stroke: none; }

.meters { margin-left: 66px; width: 39px; padding-top: 25px; }
.meter { height: 737px; background: #2a2a2a; border: 2px solid; border-color: #555 #888 #888 #555; padding: 6px 4px 3px 4px; display: flex; align-items: flex-end; }
.meter div { width: 100%; }
.green div { background: repeating-linear-gradient(#00c600 0, #00c600 2px, #009600 2px, #009600 4px, #006a00 4px, #006a00 6px); }
.lime { background: linear-gradient(#2a2a2a 0 6px, transparent 6px) , repeating-linear-gradient(#303030 0 2px, #1a1a1a 2px 6px); box-shadow: inset 0 0 0 4px #2a2a2a; }
.lime div { background: repeating-linear-gradient(#7cc400 0, #7cc400 2px, #5c9600 2px, #5c9600 4px, #406c00 4px, #406c00 6px); }
.mag { width: 36px; height: 36px; margin: 6px 0 17px; }
.mag:last-child { margin-bottom: 0; }
.mag circle:first-child { fill: #3c3c3c; }
.mag circle + circle, .mag path { fill: none; stroke: #828282; stroke-width: 4; stroke-linecap: round; }

.filters { margin-left: 21px; width: 360px; padding-top: 10px; display: flex; flex-direction: column; }
.fhead { flex: none; height: 54px; margin-bottom: 6px; display: flex; align-items: center; padding-left: 20px; font-size: 27px; color: #2e2e2e; background: linear-gradient(#aaa 0, #a4a4a4 16px, #646464); border-radius: 20px 20px 0 0; text-shadow: 0 2px 1px rgba(255,255,255,.2); letter-spacing: .1px; }
.fhead.on { background: linear-gradient(#c8c8c8 0, #c0c0c0 16px, #787878); color: #111; margin: 0; }
.fhead i { width: 16px; margin-right: 14px; }
.right { border: 8px solid transparent; border-left: 16px solid #2a2a2a; border-right: 0; }
.down { border: 8px solid transparent; border-top: 16px solid #111; border-bottom: 0; }
.fopen { height: 1476px; background: linear-gradient(#787878 0, #787878 1455px, #686868); border-radius: 20px 20px 12px 12px; }
.cut { text-align: center; font-size: 23px; line-height: 30px; margin-top: 9px; color: #222; }
.track { width: 19px; height: 1271px; margin: 11px 0 0 171px; border-radius: 10px 10px 0 0; background: linear-gradient(90deg, #404040, #5a5a5a 4px, #686868 14px, #999 16px, #8c8c8c); }
.thumb { margin: -10px 0 0 162px; }
.val { text-align: center; font-size: 23px; line-height: 34px; margin-top: 12px; color: #222; letter-spacing: .6px; }

.tooltip { position: absolute; left: 1868px; top: 1607px; width: 200px; height: 53px; border-radius: 9px; background: #ebebeb; box-shadow: 0 0 3px rgba(0,0,0,.45); font: 27px/53px Inter, sans-serif; color: #1c1c1c; text-align: center; z-index: 3; }
.tooltip svg { position: absolute; left: 83px; top: 52px; filter: drop-shadow(0 1px 1px rgba(0,0,0,.3)); }
.dock { position: absolute; left: 520px; top: 1693px; width: 1840px; height: 97px; border-radius: 25px; padding: 0 0 0 5px; display: flex; background: linear-gradient(#d1cecf, #b3b2b3); box-shadow: 0 0 0 1px rgba(150,150,150,.5), 0 8px 75px rgba(0,0,0,.4); border: 1px solid #cfcfcf; }
.dock svg { width: 77.900px; height: 96px; flex: none; overflow: visible; }
.dot { fill: #333; }
.sep { width: 2px; height: 72px; margin: 12px 14px 0 20px; background: #8c8b8c; }
.badge { font: 20px Inter, sans-serif; fill: #fff; text-anchor: middle; }
.rr { font: 46px "Liberation Serif", serif; fill: #fff; text-anchor: middle; }
.term { font: 700 17px "Liberation Mono", monospace; fill: #fff; }
.beta { font: 700 10px "Open Sans", sans-serif; fill: #fff; }
.pc { font: 700 21px "Open Sans", sans-serif; fill: #fff; }
```
